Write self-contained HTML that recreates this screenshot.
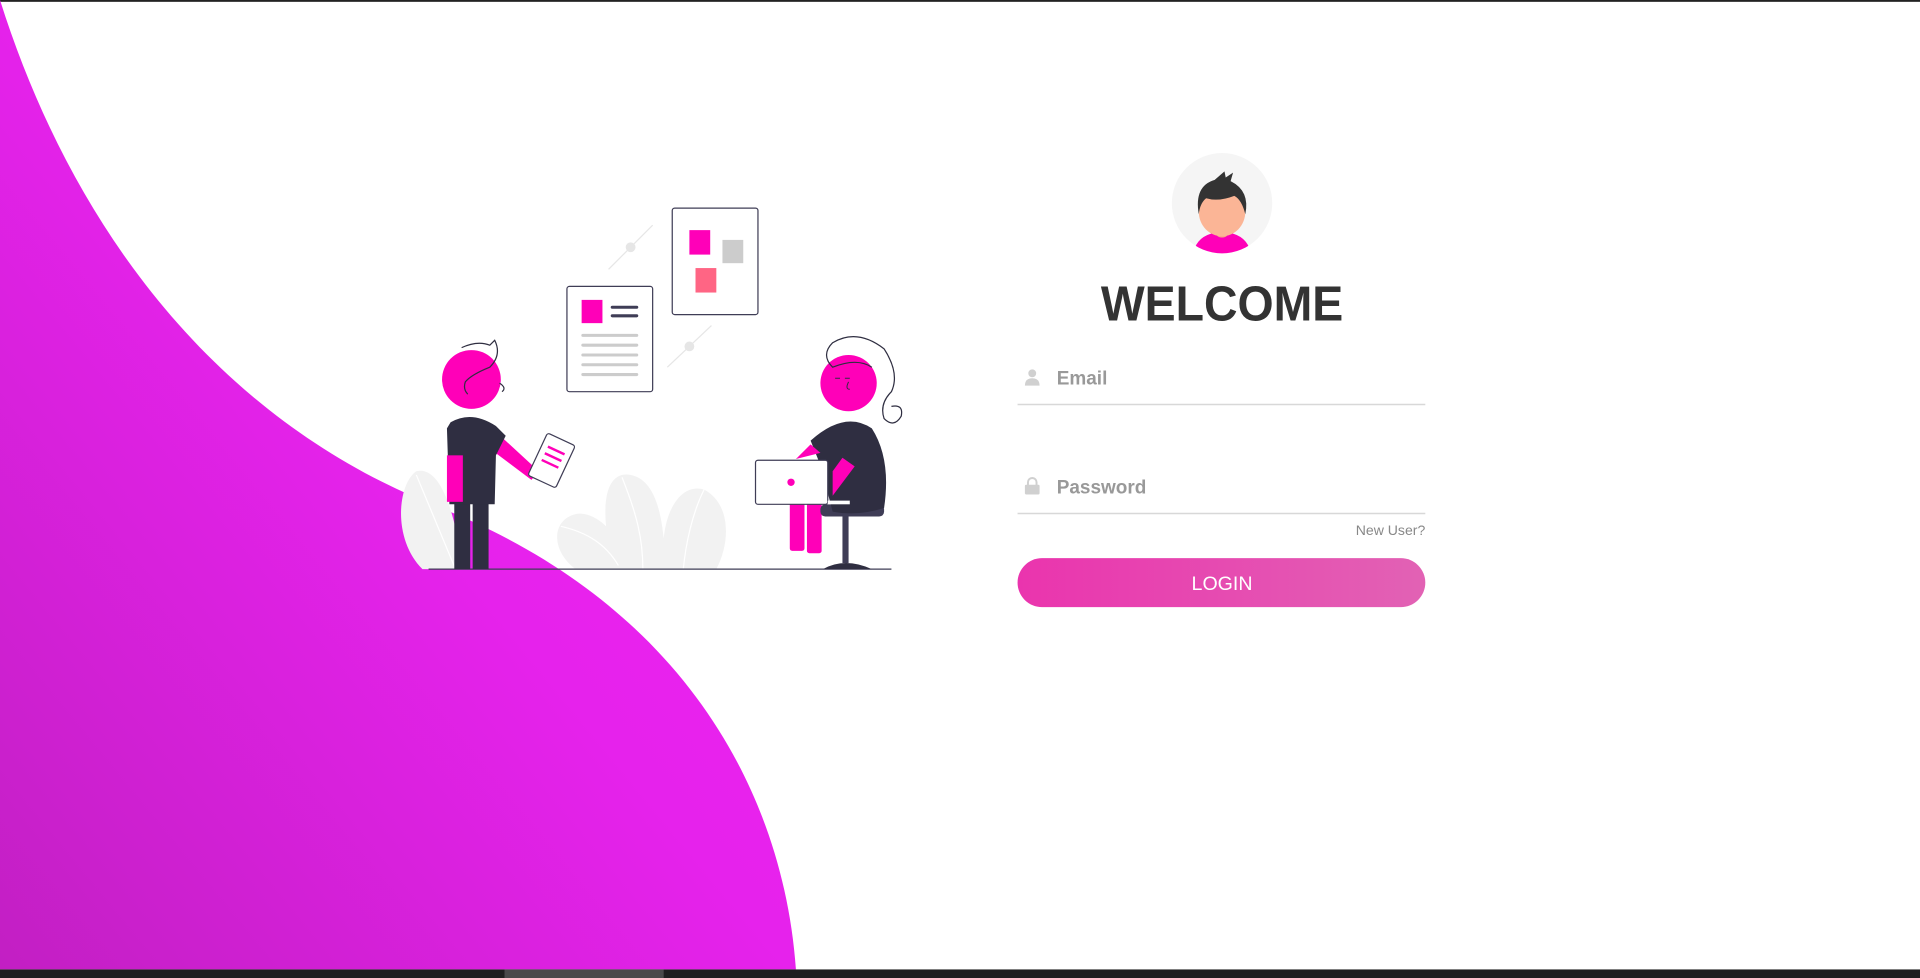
<!DOCTYPE html>
<html><head><meta charset="utf-8"><style>
html,body{margin:0;padding:0;width:1920px;height:978px;overflow:hidden;background:#fff}
svg{display:block}
text{font-family:"Liberation Sans",sans-serif}
</style></head><body>
<svg width="1920" height="978" viewBox="0 0 1568 799" preserveAspectRatio="none">
<defs>
<linearGradient id="pg" x1="0" y1="1" x2="1" y2="0">
<stop offset="0" stop-color="#c21fc3"/><stop offset="0.5" stop-color="#e622ec"/><stop offset="1" stop-color="#f424f6"/>
</linearGradient>
<linearGradient id="bg" x1="0" y1="0" x2="1" y2="0">
<stop offset="0" stop-color="#ea34ae"/><stop offset="1" stop-color="#e262b4"/>
</linearGradient>
<clipPath id="av"><circle cx="998" cy="166" r="41"/></clipPath>
</defs>
<rect x="0" y="0" width="1568" height="1.5" fill="#222"/>
<path d="M0,0 C60,190 180,345 360,415 C560,495 640,650 650,792 L0,792 Z" fill="url(#pg)"/>
<!-- plants -->
<path d="M345,465 C320,440 325,395 340,385 C360,380 372,420 378,465 Z" fill="#f2f2f2"/>
<path d="M340,388 L372,465" stroke="#fff" stroke-width="1" fill="none"/>
<path d="M470,465 C450,450 450,425 470,420 C480,418 490,425 495,430 C492,400 500,385 515,388 C535,392 540,420 542,440 C545,410 560,395 575,400 C595,410 598,440 585,465 Z" fill="#f2f2f2"/>
<path d="M508,390 C520,420 525,440 525,465 M575,400 C565,420 560,445 558,465 M458,430 C480,435 495,445 505,462" stroke="#fff" stroke-width="1" fill="none"/>
<!-- ground -->
<line x1="350" y1="465" x2="728" y2="465" stroke="#3f3d56" stroke-width="1"/>
<!-- arrows -->
<g stroke="#e6e6e6" stroke-width="1" fill="none">
<line x1="497" y1="220" x2="533" y2="184"/><line x1="545" y1="300" x2="581" y2="266"/>
</g>
<circle cx="515" cy="202" r="4" fill="#e6e6e6"/><circle cx="563" cy="283" r="4" fill="#e6e6e6"/>
<!-- doc1 -->
<rect x="463" y="234" width="70" height="86" rx="2" fill="#fff" stroke="#3f3d56"/>
<rect x="475" y="245" width="17" height="19" fill="#ff00b8"/>
<g stroke="#3f3d56" stroke-width="2.5" stroke-linecap="round"><line x1="500" y1="251" x2="520" y2="251"/><line x1="500" y1="258" x2="520" y2="258"/></g>
<g stroke="#cccccc" stroke-width="2.5" stroke-linecap="round">
<line x1="476" y1="274" x2="520" y2="274"/><line x1="476" y1="282" x2="520" y2="282"/><line x1="476" y1="290" x2="520" y2="290"/><line x1="476" y1="298" x2="520" y2="298"/><line x1="476" y1="306" x2="520" y2="306"/></g>
<!-- doc2 -->
<rect x="549" y="170" width="70" height="87" rx="2" fill="#fff" stroke="#3f3d56"/>
<rect x="563" y="188" width="17" height="20" fill="#ff00b8"/>
<rect x="590" y="196" width="17" height="19" fill="#cccccc"/>
<rect x="568" y="219" width="17" height="20" fill="#ff6584"/>
<!-- left person -->
<rect x="371" y="405" width="13" height="60" fill="#2f2e41"/><rect x="386" y="405" width="13" height="60" fill="#2f2e41"/>
<path d="M402,350 L440,385 L434,392 L398,365 Z" fill="#ff00b8"/>
<path d="M368,345 Q385,335 405,348 L413,356 L405,372 L404,412 L367,412 L365,350 Z" fill="#2f2e41"/>
<rect x="365" y="372" width="13" height="38" fill="#ff00b8"/>
<g transform="rotate(25 450 376)"><rect x="438" y="357" width="25" height="38" rx="2" fill="#fff" stroke="#3f3d56"/>
<g stroke="#ff00b8" stroke-width="2"><line x1="443" y1="367" x2="458" y2="367"/><line x1="443" y1="373" x2="458" y2="373"/><line x1="443" y1="379" x2="458" y2="379"/></g></g>
<circle cx="385" cy="310" r="24" fill="#ff00b8"/>
<path d="M377,284 Q390,278 400,282 L404,278 Q410,290 400,300 Q385,306 380,312 Q378,318 382,322" stroke="#2f2e41" fill="none" stroke-width="1"/>
<path d="M408,313 Q414,317 410,320" stroke="#2f2e41" fill="none" stroke-width="1"/>
<!-- right person -->
<rect x="645" y="410" width="12" height="40" rx="2" fill="#ff00b8"/><rect x="659" y="410" width="12" height="42" rx="2" fill="#ff00b8"/>
<rect x="670" y="412" width="52" height="10" rx="4" fill="#3f3d56"/>
<rect x="688" y="420" width="5" height="40" fill="#3f3d56"/>
<path d="M672,465 Q690,455 712,465 Z" fill="#2f2e41"/>
<path d="M662,360 Q690,335 712,350 Q728,375 722,415 Q700,422 680,418 L670,380 Z" fill="#2f2e41"/>
<path d="M650,375 L662,363 L670,370 Z" fill="#ff00b8"/>
<path d="M680,385 L688,374 L698,381 L680,405 Z" fill="#ff00b8"/>
<rect x="617" y="376" width="59" height="36" rx="2" fill="#fff" stroke="#3f3d56"/>
<rect x="676" y="409" width="18" height="3" fill="#fff"/>
<circle cx="646" cy="394" r="3" fill="#ff00b8"/>
<circle cx="693" cy="313" r="23" fill="#ff00b8"/>
<path d="M712,300 Q700,292 680,300 Q670,290 680,280 Q700,268 722,285 Q735,305 728,320 Q718,330 722,342 Q730,350 736,340 Q738,330 728,332" stroke="#2f2e41" fill="none" stroke-width="1"/>
<path d="M682,309 L686,309 M690,309 L694,309 M693,312 Q690,318 694,318" stroke="#2f2e41" fill="none" stroke-width="0.8"/>
<!-- avatar -->
<circle cx="998" cy="166" r="41" fill="#f5f5f5"/>
<g clip-path="url(#av)">
<path d="M975,205 Q978,193 992,190 L1004,190 Q1018,193 1021,205 L1021,210 L975,210 Z" fill="#ff00b8"/>
</g>
<rect x="993" y="180" width="10" height="14" rx="4" fill="#f4a886"/>
<ellipse cx="998" cy="173" rx="19" ry="20" fill="#fbb596"/>
<path d="M979,175 Q975,152 992,147 L1000,140 L1001,145 L1007,141 L1005,148 Q1021,156 1017,175 Q1014,163 1008,160 Q995,165 985,162 Q980,166 979,175 Z" fill="#333"/>
<!-- form -->
<text x="899" y="262" textLength="198" lengthAdjust="spacingAndGlyphs" font-size="40" font-weight="bold" fill="#333">WELCOME</text>
<circle cx="843" cy="305" r="3.2" fill="#d0d0d0"/><path d="M837,315 Q837,309 843,309 Q849,309 849,315 Z" fill="#d0d0d0"/>
<text x="863" y="314" font-size="15.5" font-weight="bold" fill="#999">Email</text>
<line x1="831" y1="330.5" x2="1164" y2="330.5" stroke="#d8d8d8" stroke-width="1.2"/>
<path d="M839.5,397 v-3 a3.5,3.5 0 0 1 7,0 v3" stroke="#d0d0d0" stroke-width="1.6" fill="none"/><rect x="837" y="396" width="12" height="8" rx="1" fill="#d0d0d0"/>
<text x="863" y="403" font-size="15.5" font-weight="bold" fill="#999">Password</text>
<line x1="831" y1="419.5" x2="1164" y2="419.5" stroke="#d8d8d8" stroke-width="1.2"/>
<text x="1164" y="437" text-anchor="end" font-size="11.5" fill="#888">New User?</text>
<rect x="831" y="456" width="333" height="40" rx="20" fill="url(#bg)"/>
<text x="998" y="482" text-anchor="middle" font-size="16" fill="#fff">LOGIN</text>
<!-- taskbar -->
<rect x="0" y="792" width="1568" height="7" fill="#1f1f1f"/>
<rect x="412" y="792" width="130" height="7" fill="#4a4a4a"/>
</svg>
</body></html>
